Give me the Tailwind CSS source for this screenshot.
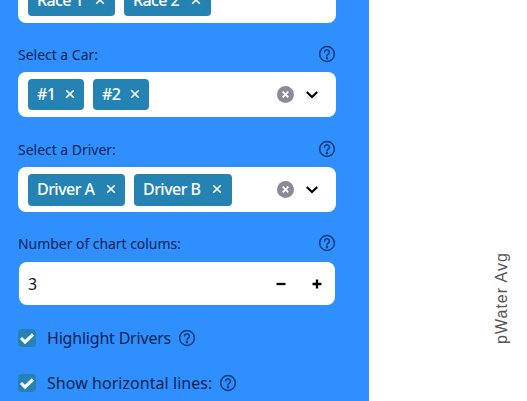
<!DOCTYPE html>
<html><head><meta charset="utf-8"><script src="https://cdn.jsdelivr.net/npm/@tailwindcss/browser@4"></script></head>
<body class="m-0 h-[401px] w-[527px] overflow-hidden bg-white font-['Noto_Sans',sans-serif]">
<div class="flex h-[401px] w-[527px] overflow-hidden">
<aside class="h-[401px] w-[369px] shrink-0 bg-[#308fff] pl-[18px] pr-[33px] text-[#0a2351]">
  <div class="mt-[-22px] flex h-[45px] items-center gap-[9px] rounded-lg bg-white pl-[10px]">
    <span class="flex h-[31px] w-[87px] items-center justify-between rounded bg-[#2483b3] pb-px pl-[9px] pr-[8px] text-[16px] font-medium tracking-[-0.6px] text-white">Race 1 <svg class="h-[14px] w-[14px]" viewBox="0 0 14 14" fill="none" stroke="white" stroke-width="1.6"><path d="M3.2 3.2l7.6 7.6M10.8 3.2l-7.6 7.6"/></svg></span>
    <span class="flex h-[31px] w-[87px] items-center justify-between rounded bg-[#2483b3] pb-px pl-[9px] pr-[8px] text-[16px] font-medium tracking-[-0.6px] text-white">Race 2 <svg class="h-[14px] w-[14px]" viewBox="0 0 14 14" fill="none" stroke="white" stroke-width="1.6"><path d="M3.2 3.2l7.6 7.6M10.8 3.2l-7.6 7.6"/></svg></span>
  </div>

  <div class="mt-[22px] flex h-[18px] items-center justify-between text-[14px] tracking-[-0.02px]">
    <span>Select a Car:</span>
    <svg class="h-[18px] w-[18px]" viewBox="0 0 18 18" fill="none" stroke="#0a3a78" stroke-width="1.5"><circle cx="9" cy="9" r="7.4"/><path d="M6.6 7.1a2.4 2.4 0 1 1 3.6 2.1c-.8.5-1.2.9-1.2 1.8" stroke-linecap="round"/><circle cx="9" cy="13.2" r=".5" fill="#0a3a78"/></svg>
  </div>
  <div class="mt-[9px] flex h-[45px] items-center rounded-lg bg-white pl-[10px]">
    <div class="flex gap-[9px]">
      <span class="flex h-[31px] w-[56px] items-center justify-between rounded bg-[#2483b3] pb-px pl-[9px] pr-[7px] text-[16px] font-medium tracking-[-0.6px] text-white">#1 <svg class="h-[14px] w-[14px]" viewBox="0 0 14 14" fill="none" stroke="white" stroke-width="1.6"><path d="M3.2 3.2l7.6 7.6M10.8 3.2l-7.6 7.6"/></svg></span>
      <span class="flex h-[31px] w-[56px] items-center justify-between rounded bg-[#2483b3] pb-px pl-[9px] pr-[7px] text-[16px] font-medium tracking-[-0.6px] text-white">#2 <svg class="h-[14px] w-[14px]" viewBox="0 0 14 14" fill="none" stroke="white" stroke-width="1.6"><path d="M3.2 3.2l7.6 7.6M10.8 3.2l-7.6 7.6"/></svg></span>
    </div>
    <div class="ml-auto mr-[16px] flex items-center gap-[10px]">
      <svg class="h-[17px] w-[17px]" viewBox="0 0 17 17"><circle cx="8.5" cy="8.5" r="8.5" fill="#8b8a97"/><path d="M5.7 5.7l5.6 5.6M11.3 5.7l-5.6 5.6" stroke="white" stroke-width="1.8"/></svg>
      <svg class="h-[16px] w-[16px]" viewBox="0 0 16 16" fill="none" stroke="black" stroke-width="2.1"><path d="M2.8 5l5.2 5 5.2-5"/></svg>
    </div>
  </div>

  <div class="mt-[23px] flex h-[18px] items-center justify-between text-[14px] tracking-[-0.02px]">
    <span>Select a Driver:</span>
    <svg class="h-[18px] w-[18px]" viewBox="0 0 18 18" fill="none" stroke="#0a3a78" stroke-width="1.5"><circle cx="9" cy="9" r="7.4"/><path d="M6.6 7.1a2.4 2.4 0 1 1 3.6 2.1c-.8.5-1.2.9-1.2 1.8" stroke-linecap="round"/><circle cx="9" cy="13.2" r=".5" fill="#0a3a78"/></svg>
  </div>
  <div class="mt-[9px] flex h-[45px] items-center rounded-lg bg-white pl-[10px]">
    <div class="flex gap-[9px]">
      <span class="flex h-[32px] w-[97px] items-center justify-between rounded bg-[#2483b3] pb-px pl-[9px] pr-[7px] text-[16px] font-medium tracking-[-0.55px] text-white">Driver A <svg class="h-[14px] w-[14px]" viewBox="0 0 14 14" fill="none" stroke="white" stroke-width="1.6"><path d="M3.2 3.2l7.6 7.6M10.8 3.2l-7.6 7.6"/></svg></span>
      <span class="flex h-[32px] w-[98px] items-center justify-between rounded bg-[#2483b3] pb-px pl-[9px] pr-[8px] text-[16px] font-medium tracking-[-0.55px] text-white">Driver B <svg class="h-[14px] w-[14px]" viewBox="0 0 14 14" fill="none" stroke="white" stroke-width="1.6"><path d="M3.2 3.2l7.6 7.6M10.8 3.2l-7.6 7.6"/></svg></span>
    </div>
    <div class="ml-auto mr-[16px] flex items-center gap-[10px]">
      <svg class="h-[17px] w-[17px]" viewBox="0 0 17 17"><circle cx="8.5" cy="8.5" r="8.5" fill="#8b8a97"/><path d="M5.7 5.7l5.6 5.6M11.3 5.7l-5.6 5.6" stroke="white" stroke-width="1.8"/></svg>
      <svg class="h-[16px] w-[16px]" viewBox="0 0 16 16" fill="none" stroke="black" stroke-width="2.1"><path d="M2.8 5l5.2 5 5.2-5"/></svg>
    </div>
  </div>

  <div class="mt-[22px] flex h-[18px] items-center justify-between text-[14px] tracking-[-0.05px]">
    <span>Number of chart colums:</span>
    <svg class="h-[18px] w-[18px]" viewBox="0 0 18 18" fill="none" stroke="#0a3a78" stroke-width="1.5"><circle cx="9" cy="9" r="7.4"/><path d="M6.6 7.1a2.4 2.4 0 1 1 3.6 2.1c-.8.5-1.2.9-1.2 1.8" stroke-linecap="round"/><circle cx="9" cy="13.2" r=".5" fill="#0a3a78"/></svg>
  </div>
  <div class="ml-px mr-px mt-[10px] flex h-[43px] items-center rounded-lg bg-white pl-[9px] text-[16px] text-[#111827]">
    <span>3</span>
    <div class="ml-auto mr-[11px] flex items-center gap-[22px]">
      <svg class="h-[14px] w-[14px]" viewBox="0 0 14 14" stroke="black" stroke-width="2.3"><path d="M2.5 7h9"/></svg>
      <svg class="h-[14px] w-[14px]" viewBox="0 0 14 14" stroke="black" stroke-width="2.3"><path d="M2.5 7h9M7 2.5v9"/></svg>
    </div>
  </div>

  <div class="mt-[24px] flex h-[18px] items-center text-[16px] tracking-[-0.2px]">
    <span class="mr-[11px] flex h-[18px] w-[18px] items-center justify-center rounded bg-[#2483b3]"><svg class="h-[16px] w-[16px]" viewBox="0 0 16 16" fill="none" stroke="white" stroke-width="3.1"><path d="M2 8l4 4 8-7.5"/></svg></span>
    <span>Highlight Drivers</span>
    <svg class="ml-[7px] h-[18px] w-[18px]" viewBox="0 0 18 18" fill="none" stroke="#0a3a78" stroke-width="1.5"><circle cx="9" cy="9" r="7.4"/><path d="M6.6 7.1a2.4 2.4 0 1 1 3.6 2.1c-.8.5-1.2.9-1.2 1.8" stroke-linecap="round"/><circle cx="9" cy="13.2" r=".5" fill="#0a3a78"/></svg>
  </div>
  <div class="mt-[27px] flex h-[18px] items-center text-[16px] tracking-[0.05px]">
    <span class="mr-[11px] flex h-[18px] w-[18px] items-center justify-center rounded bg-[#2483b3]"><svg class="h-[16px] w-[16px]" viewBox="0 0 16 16" fill="none" stroke="white" stroke-width="3.1"><path d="M2 8l4 4 8-7.5"/></svg></span>
    <span>Show horizontal lines:</span>
    <svg class="ml-[7px] h-[18px] w-[18px]" viewBox="0 0 18 18" fill="none" stroke="#0a3a78" stroke-width="1.5"><circle cx="9" cy="9" r="7.4"/><path d="M6.6 7.1a2.4 2.4 0 1 1 3.6 2.1c-.8.5-1.2.9-1.2 1.8" stroke-linecap="round"/><circle cx="9" cy="13.2" r=".5" fill="#0a3a78"/></svg>
  </div>
</aside>
<main class="relative flex-1">
  <span class="absolute left-[133px] top-[298px] -translate-x-1/2 -translate-y-1/2 -rotate-90 whitespace-nowrap font-['Liberation_Sans',sans-serif] text-[16px] tracking-[1px] text-[#555]">pWater Avg</span>
</main>
</div>
</body></html>
